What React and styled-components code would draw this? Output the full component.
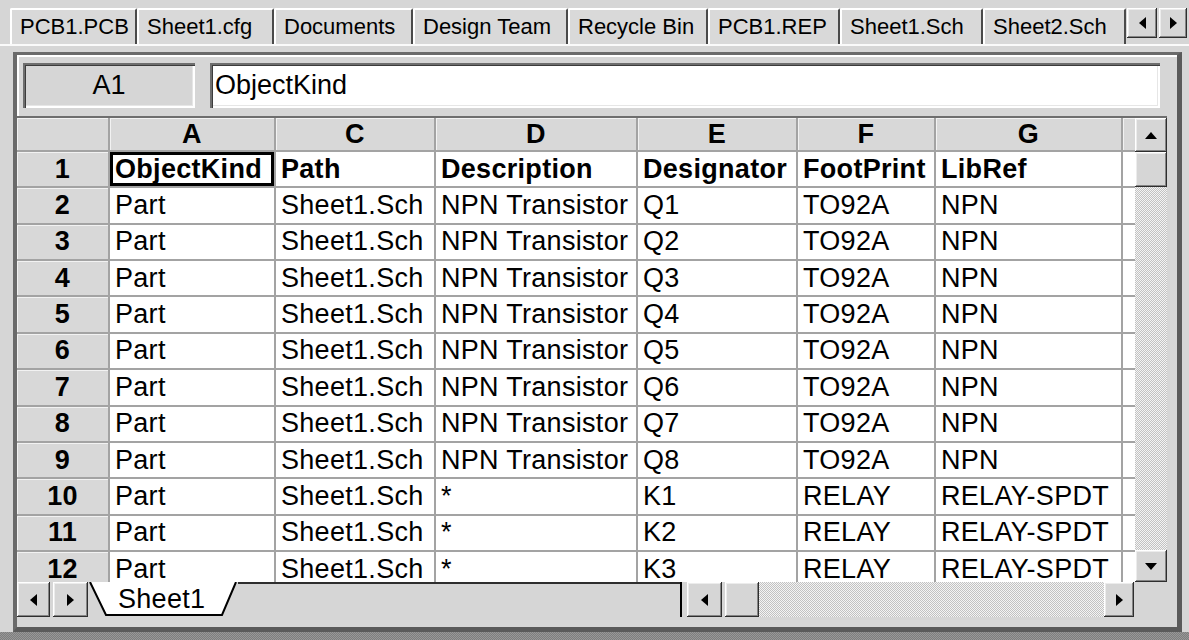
import React from "react";
import styled, { createGlobalStyle, css } from "styled-components";

const GlobalStyle = createGlobalStyle`
  html, body {
    margin: 0;
    padding: 0;
  }
  body {
    background: #d6d6d6;
    font-family: "Liberation Sans", Arial, sans-serif;
    color: #000;
  }
`;

const FACE = "#d6d6d6";
const GRID_LINE = "#a3a3a3";

const raised = css`
  background: ${FACE};
  box-shadow: inset -1px -1px 0 #2e2e2e, inset 1px 1px 0 #ffffff,
    inset -2px -2px 0 #858585, inset 2px 2px 0 #ececec;
`;

const sunken = css`
  box-shadow: inset 2px 2px 0 #6e6e6e, inset 3px 3px 0 #3c3c3c,
    inset -2px -2px 0 #ffffff, inset -3px -3px 0 #e6e6e6;
`;

const stipple = css`
  background-color: #ececec;
  background-image: repeating-conic-gradient(#c2c2c2 0% 25%, #f4f4f4 0% 50%);
  background-size: 2px 2px;
`;

const Window = styled.div`
  width: 1189px;
  height: 640px;
  overflow: hidden;
  background: ${FACE};
  display: flex;
  flex-direction: column;
`;

/* ---------- document tabs ---------- */

const TabStrip = styled.div`
  height: 46px;
  box-sizing: border-box;
  padding: 8px 2px 0 10px;
  display: flex;
  align-items: flex-start;
  border-bottom: 2px solid #fafafa;
`;

const TabList = styled.div`
  flex: 1;
  display: flex;
  height: 36px;
  overflow: hidden;
`;

const DocTab = styled.div`
  flex: 0 0 ${(p) => p.$w}px;
  height: 36px;
  box-sizing: border-box;
  background: #d9d9d9;
  border-left: 2px solid #ffffff;
  border-top: 2px solid #ffffff;
  border-right: 2px solid #4a4a4a;
  border-top-left-radius: 2px;
  border-top-right-radius: 2px;
  padding-left: 8px;
  display: flex;
  align-items: center;
  font-size: 22px;
  white-space: nowrap;
  overflow: hidden;
`;

const TabArrows = styled.div`
  display: flex;
  gap: 2px;
`;

const SmallButton = styled.div`
  ${raised};
  width: ${(p) => p.$w}px;
  height: ${(p) => p.$h}px;
  box-sizing: border-box;
  display: flex;
  align-items: center;
  justify-content: center;
  flex: 0 0 auto;
`;

/* ---------- main panel ---------- */

const Panel = styled.div`
  margin: 6px 0 0 13px;
  width: 1169px;
  height: 580px;
  box-sizing: border-box;
  border-left: 4px solid #6a6a6a;
  border-top: 3px solid #6a6a6a;
  border-right: 5px solid #5a5a5a;
  border-bottom: 5px solid #5a5a5a;
  display: flex;
  flex-direction: column;
  background: ${FACE};
`;

const Toolbar = styled.div`
  height: 61px;
  box-sizing: border-box;
  padding: 8px 17px 0 6px;
  display: flex;
  align-items: flex-start;
  gap: 15px;
  box-shadow: inset 2px 2px 0 #ffffff;
`;

const NameBox = styled.div`
  ${sunken};
  background: ${FACE};
  width: 172px;
  height: 45px;
  display: flex;
  align-items: center;
  justify-content: center;
  font-size: 27px;
`;

const FormulaBox = styled.div`
  ${sunken};
  background: #ffffff;
  flex: 1;
  height: 45px;
  box-sizing: border-box;
  padding-left: 5px;
  display: flex;
  align-items: center;
  font-size: 27px;
`;

const GridArea = styled.div`
  height: 466px;
  box-sizing: border-box;
  margin-right: 10px;
  border-top: 2px solid #6e6e6e;
  display: flex;
`;

const Sheet = styled.div`
  width: 1118px;
  height: 464px;
  overflow: hidden;
  display: grid;
  grid-template-columns: 93px 166px 160px 202px 160px 138px 187px 12px;
  grid-template-rows: 34px repeat(12, 36.36px);
  align-content: start;
  background: #ffffff;
`;

const Cell = styled.div`
  box-sizing: border-box;
  border-right: ${(p) => (p.$edge ? "none" : `2px solid ${GRID_LINE}`)};
  border-bottom: 2px solid ${GRID_LINE};
  background: ${(p) => (p.$head ? "#d8d8d8" : "#ffffff")};
  display: flex;
  align-items: center;
  justify-content: ${(p) => (p.$head ? "center" : "flex-start")};
  padding-left: ${(p) => (p.$head ? 0 : 5)}px;
  font-size: 27px;
  letter-spacing: 0.3px;
  font-weight: ${(p) => (p.$bold || p.$head ? 700 : 400)};
  white-space: nowrap;
  overflow: hidden;
  ${(p) =>
    p.$head &&
    css`
      box-shadow: inset 1px 1px 0 #f2f2f2;
    `}
  ${(p) =>
    p.$active &&
    css`
      box-shadow: inset 0 0 0 3px #000000;
    `}
`;

const VScroll = styled.div`
  width: 32px;
  display: flex;
  flex-direction: column;
`;

const Track = styled.div`
  ${stipple};
  flex: 1;
`;

/* ---------- bottom bar ---------- */

const BottomBar = styled.div`
  height: 35px;
  margin-right: 10px;
  display: flex;
`;

const NavGroup = styled.div`
  display: flex;
  gap: 3px;
`;

const SheetTab = styled.div`
  position: relative;
  width: 150px;
  flex: 0 0 auto;
  font-size: 27px;
  letter-spacing: 0.3px;
  padding-left: 30px;
  box-sizing: border-box;
  display: flex;
  align-items: center;
  span {
    position: relative;
  }
  svg {
    position: absolute;
    inset: 0;
  }
`;

const TabFiller = styled.div`
  flex: 1;
  background: ${FACE};
  border-top: 2px solid #2e2e2e;
`;

const Splitter = styled.div`
  width: 7px;
  flex: 0 0 auto;
  box-sizing: border-box;
  border-left: 2px solid #000000;
  background: ${FACE};
`;

const HScroll = styled.div`
  width: 447px;
  display: flex;
  background: ${FACE};
`;

const HThumb = styled.div`
  ${raised};
  width: 34px;
  margin-left: 3px;
  flex: 0 0 auto;
`;

const HTrack = styled.div`
  ${stipple};
  flex: 1;
`;

const Corner = styled.div`
  width: 33px;
  background: ${FACE};
`;

const Footer = styled.div`
  height: 8px;
  ${stipple};
  background-color: #8c8c8c;
  background-image: repeating-conic-gradient(#7e7e7e 0% 25%, #979797 0% 50%);
`;

const Arrow = ({ dir }) => {
  const shapes = {
    left: "7,0 7,12 0,6",
    right: "0,0 0,12 7,6",
    up: "0,7 12,7 6,0",
    down: "0,0 12,0 6,7",
  };
  const vertical = dir === "up" || dir === "down";
  return (
    <svg width={vertical ? 12 : 7} height={vertical ? 7 : 12}>
      <polygon points={shapes[dir]} fill="#000" />
    </svg>
  );
};

const docTabs = [
  { name: "PCB1.PCB", w: 127 },
  { name: "Sheet1.cfg", w: 137 },
  { name: "Documents", w: 139 },
  { name: "Design Team", w: 155 },
  { name: "Recycle Bin", w: 140 },
  { name: "PCB1.REP", w: 132 },
  { name: "Sheet1.Sch", w: 143 },
  { name: "Sheet2.Sch", w: 143 },
];

const columns = ["A", "C", "D", "E", "F", "G"];

const rows = [
  ["ObjectKind", "Path", "Description", "Designator", "FootPrint", "LibRef"],
  ...[1, 2, 3, 4, 5, 6, 7, 8].map((n) => [
    "Part",
    "Sheet1.Sch",
    "NPN Transistor",
    `Q${n}`,
    "TO92A",
    "NPN",
  ]),
  ...[1, 2, 3].map((n) => [
    "Part",
    "Sheet1.Sch",
    "*",
    `K${n}`,
    "RELAY",
    "RELAY-SPDT",
  ]),
];

export default function App() {
  return (
    <>
      <GlobalStyle />
      <Window>
        <TabStrip>
          <TabList>
            {docTabs.map((t) => (
              <DocTab key={t.name} $w={t.w}>
                {t.name}
              </DocTab>
            ))}
          </TabList>
          <TabArrows>
            <SmallButton $w={30} $h={30}>
              <Arrow dir="left" />
            </SmallButton>
            <SmallButton $w={28} $h={30}>
              <Arrow dir="right" />
            </SmallButton>
          </TabArrows>
        </TabStrip>

        <Panel>
          <Toolbar>
            <NameBox>A1</NameBox>
            <FormulaBox>ObjectKind</FormulaBox>
          </Toolbar>

          <GridArea>
            <Sheet>
              <Cell $head />
              {columns.map((c) => (
                <Cell key={c} $head>
                  {c}
                </Cell>
              ))}
              <Cell $head $edge />
              {rows.map((r, i) => (
                <React.Fragment key={i}>
                  <Cell $head>{i + 1}</Cell>
                  {r.map((v, j) => (
                    <Cell key={j} $bold={i === 0} $active={i === 0 && j === 0}>
                      {v}
                    </Cell>
                  ))}
                  <Cell $edge />
                </React.Fragment>
              ))}
            </Sheet>
            <VScroll>
              <SmallButton $w={32} $h={34}>
                <Arrow dir="up" />
              </SmallButton>
              <SmallButton $w={32} $h={35} />
              <Track />
              <SmallButton $w={32} $h={32}>
                <Arrow dir="down" />
              </SmallButton>
            </VScroll>
          </GridArea>

          <BottomBar>
            <NavGroup>
              <SmallButton $w={33} $h={35}>
                <Arrow dir="left" />
              </SmallButton>
              <SmallButton $w={35} $h={35}>
                <Arrow dir="right" />
              </SmallButton>
            </NavGroup>
            <SheetTab>
              <svg width="150" height="35">
                <polygon points="2,0 18,33 134,33 148,0" fill="#ffffff" />
                <polyline
                  points="2,0 18,33 134,33 148,0"
                  fill="none"
                  stroke="#000"
                  strokeWidth="2"
                />
              </svg>
              <span>Sheet1</span>
            </SheetTab>
            <TabFiller />
            <Splitter />
            <HScroll>
              <SmallButton $w={35} $h={35}>
                <Arrow dir="left" />
              </SmallButton>
              <HThumb />
              <HTrack />
              <SmallButton $w={30} $h={35}>
                <Arrow dir="right" />
              </SmallButton>
            </HScroll>
            <Corner />
          </BottomBar>
        </Panel>
        <Footer />
      </Window>
    </>
  );
}
